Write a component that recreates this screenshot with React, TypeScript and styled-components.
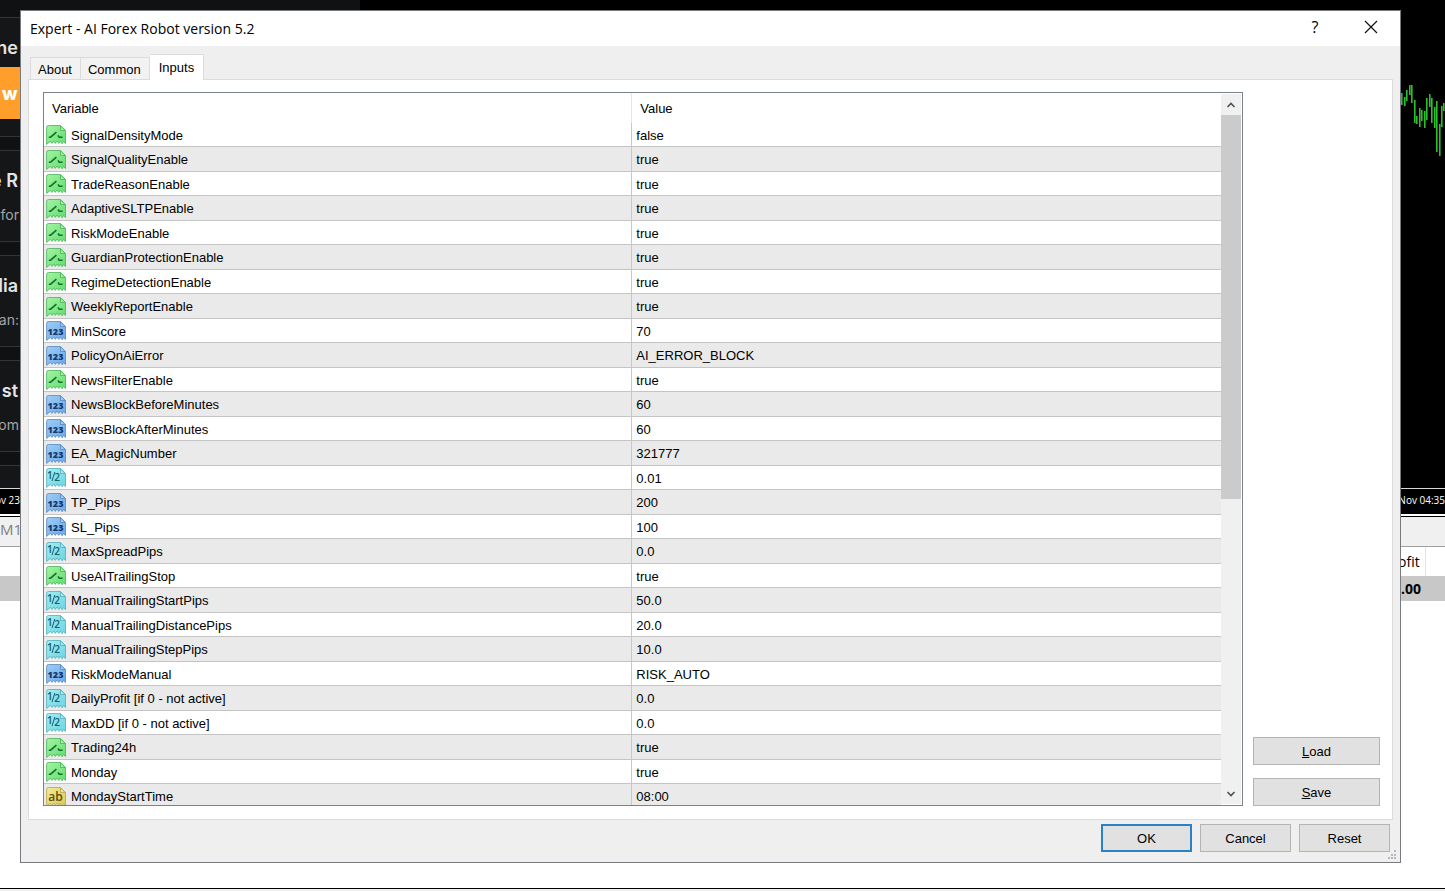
import React, { useState } from "react";
import styled, { createGlobalStyle, css } from "styled-components";

const GlobalStyle = createGlobalStyle`
  *, *::before, *::after { box-sizing: border-box; }
  body { margin: 0; background: #fff; }
  button { font: inherit; color: inherit; }
`;

const uiFont = `"Liberation Sans", Arial, sans-serif`;
const segoe = `"Open Sans", "Noto Sans", sans-serif`;

/* ---------- data ---------- */

type Kind = "bool" | "int" | "real" | "text";

const inputs: [Kind, string, string][] = [
  ["bool", "SignalDensityMode", "false"],
  ["bool", "SignalQualityEnable", "true"],
  ["bool", "TradeReasonEnable", "true"],
  ["bool", "AdaptiveSLTPEnable", "true"],
  ["bool", "RiskModeEnable", "true"],
  ["bool", "GuardianProtectionEnable", "true"],
  ["bool", "RegimeDetectionEnable", "true"],
  ["bool", "WeeklyReportEnable", "true"],
  ["int", "MinScore", "70"],
  ["int", "PolicyOnAiError", "AI_ERROR_BLOCK"],
  ["bool", "NewsFilterEnable", "true"],
  ["int", "NewsBlockBeforeMinutes", "60"],
  ["int", "NewsBlockAfterMinutes", "60"],
  ["int", "EA_MagicNumber", "321777"],
  ["real", "Lot", "0.01"],
  ["int", "TP_Pips", "200"],
  ["int", "SL_Pips", "100"],
  ["real", "MaxSpreadPips", "0.0"],
  ["bool", "UseAITrailingStop", "true"],
  ["real", "ManualTrailingStartPips", "50.0"],
  ["real", "ManualTrailingDistancePips", "20.0"],
  ["real", "ManualTrailingStepPips", "10.0"],
  ["int", "RiskModeManual", "RISK_AUTO"],
  ["real", "DailyProfit [if 0 - not active]", "0.0"],
  ["real", "MaxDD [if 0 - not active]", "0.0"],
  ["bool", "Trading24h", "true"],
  ["bool", "Monday", "true"],
  ["text", "MondayStartTime", "08:00"],
];

/* x, top, bottom of each price bar */
const bars = [
  [0, 13, 25], [3, 17, 26], [5, 10, 21], [8, 5, 15], [10, 5, 23], [13, 20, 43],
  [15, 36, 44], [18, 28, 47], [20, 30, 41], [23, 31, 48], [25, 18, 40], [28, 14, 27],
  [30, 18, 43], [33, 27, 48], [35, 21, 72], [38, 44, 76], [40, 26, 47], [42, 23, 31],
];

/* ---------- terminal behind the dialog ---------- */

const Screen = styled.div`
  position: relative;
  display: flex;
  min-height: 100vh;
  padding: 10px 44px 28px 20px;
  overflow: hidden;
  font-family: ${uiFont};
  font-size: 13px;
  color: #000;
`;

const Backdrop = styled.div`
  position: absolute;
  inset: 0;
  display: flex;
  flex-direction: column;
  background: #fff;
`;

const Workspace = styled.div`
  display: flex;
  height: 488px;
  background: #000;
`;

const Sidebar = styled.aside`
  display: flex;
  flex-direction: column;
  gap: 13px;
  width: 360px;
  padding-top: 17px;
  overflow: hidden;
  background: #101113;
  font-family: Inter, sans-serif;
`;

const Card = styled.section<{ $tall?: boolean }>`
  flex: none;
  height: ${(p) => (p.$tall ? 120 : 92)}px;
  padding-top: 18px;
  border: solid #30353a;
  border-width: 1px 0;
  background: #141618;
`;

const CardTitle = styled.div`
  display: flex;
  justify-content: flex-end;
  width: 18px;
  height: 24px;
  font-size: 18px;
  line-height: 24px;
  font-weight: 600;
  color: #e4e4e4;
  white-space: nowrap;
`;

const CardText = styled.div`
  display: flex;
  justify-content: flex-end;
  width: 19px;
  margin-top: 12px;
  font-size: 14px;
  line-height: 20px;
  color: #a6a6a6;
  white-space: nowrap;
`;

const Banner = styled.div`
  height: 52px;
  margin-top: 7px;
  padding-left: 2px;
  background: #ff9e2a;
  font-size: 18px;
  line-height: 54px;
  font-weight: 800;
  color: #fff;
`;

const Chart = styled.div`
  display: flex;
  flex: 1;
  justify-content: flex-end;
  padding-top: 80px;
`;

const TimeAxis = styled.div`
  display: flex;
  justify-content: space-between;
  height: 26px;
  border-top: 1px solid #d8d8d8;
  background: #000;
  font: 10px/22px ${segoe};
  color: #fff;
  white-space: nowrap;
`;

const AxisLabel = styled.span<{ $start?: boolean }>`
  display: flex;
  justify-content: flex-end;
  width: ${(p) => (p.$start ? "20px" : "auto")};
`;

const ChartTabs = styled.div`
  height: 31px;
  border-top: 1px solid #000;
  border-bottom: 1px solid #a0a0a0;
  margin-top: 2px;
  background: #f0f0f0;
  font: 15px/24px ${segoe};
  color: #808080;
`;

const TradeRow = styled.div<{ $selected?: boolean }>`
  display: flex;
  justify-content: flex-end;
  height: ${(p) => (p.$selected ? 25 : 29)}px;
  font: 14px/30px ${segoe};
  ${(p) =>
    p.$selected &&
    css`
      background: #c8c8c8;
      font-weight: 700;
      line-height: 26px;
    `}
`;

const TradeCell = styled.span`
  width: 44px;
`;

const TradeHead = styled.span`
  width: 28px;
  margin-right: 19px;
  border-right: 1px solid #e5e5e5;
`;

const StatusEdge = styled.div`
  height: 3px;
  margin-top: auto;
  border-top: 1px solid #000;
  background: #f0f0f0;
`;

/* ---------- dialog ---------- */

const Dialog = styled.main`
  position: relative;
  display: flex;
  flex: 1;
  flex-direction: column;
  min-width: 0;
  border: 1px solid #777a7e;
  background: #efefef;
`;

const TitleBar = styled.header`
  display: flex;
  align-items: center;
  height: 35px;
  padding: 0 9px;
  background: #fff;
`;

const Title = styled.h1`
  flex: 1;
  margin: 0;
  font: 400 14px/20px ${segoe};
`;

const CaptionButton = styled.button`
  display: flex;
  align-items: center;
  justify-content: center;
  width: 40px;
  height: 28px;
  margin-left: 16px;
  padding: 0 0 4px;
  border: 0;
  background: none;
  font: 500 16px/20px ${segoe};
`;

const TabList = styled.div`
  display: flex;
  align-items: flex-end;
  height: 33px;
  padding: 0 9px;
`;

const Tab = styled.button<{ $active: boolean }>`
  height: 22px;
  padding: 2px 8px 0 7px;
  border: solid #dcdcdc;
  border-width: 1px 1px 0 0;
  background: #f2f2f2;
  line-height: 19px;
  white-space: nowrap;
  &:first-child { border-left-width: 1px; }
  ${(p) =>
    p.$active &&
    css`
      position: relative;
      z-index: 1;
      height: 26px;
      margin-bottom: -1px;
      padding: 0 9px 1px;
      background: #fff;
    `}
`;

const Page = styled.section`
  display: flex;
  flex: 1;
  gap: 10px;
  min-height: 0;
  margin: 0 7px;
  padding: 12px 12px 13px 14px;
  border: 1px solid #dcdcdc;
  background: #fff;
`;

const ListBox = styled.div`
  display: flex;
  flex: 1;
  height: calc(100vh - 177px);
  min-width: 0;
  overflow: hidden;
  border: 1px solid #7c828a;
`;

const TableWrap = styled.div`
  flex: 1;
  min-width: 0;
  height: 100%;
  overflow: hidden;
`;

const Table = styled.table`
  width: 100%;
  border-collapse: separate;
  border-spacing: 0;
  table-layout: fixed;
`;

const HeadCell = styled.th`
  height: 30px;
  padding: 0 8px;
  font-weight: 400;
  text-align: left;
  &:first-child { width: 49.9%; }
  & + & { border-left: 1px solid #e5e5e5; }
`;

const Row = styled.tr`
  height: 24px;
  &:nth-child(even) { height: 25px; background: #eaeaea; }
`;

const Cell = styled.td`
  padding: 1px 4px 0;
  border-bottom: 1px solid #c4c4c4;
  white-space: nowrap;
  & + & { border-left: 1px solid #c8c8c8; }
`;

const NameCell = styled(Cell)`
  padding: 1px 2px 0;
`;

const Name = styled.span`
  display: flex;
  align-items: center;
  gap: 5px;
  height: 22px;
`;

const ScrollBar = styled.div`
  display: flex;
  flex-direction: column;
  width: 20px;
  margin: 1px 1px 1px 0;
  background: #f0f0f0;
`;

const ScrollButton = styled.button`
  display: flex;
  flex: none;
  align-items: center;
  justify-content: center;
  height: 21px;
  padding: 0;
  border: 0;
  background: none;
`;

const Track = styled.div`
  flex: 1;
`;

const Thumb = styled.div`
  height: 57.5%;
  background: #cbcbcb;
`;

const SideButtons = styled.div`
  display: flex;
  flex-direction: column;
  justify-content: flex-end;
  gap: 13px;
  width: 127px;
`;

const PushButton = styled.button<{ $default?: boolean; $wide?: boolean }>`
  width: ${(p) => (p.$wide ? "100%" : "91px")};
  height: 28px;
  padding: 1px 0 0;
  border: ${(p) => (p.$default ? "2px solid #2a82c4" : "1px solid #b4b4b4")};
  background: #e1e1e1;
  line-height: 23px;
`;

const Footer = styled.footer`
  display: flex;
  align-items: flex-start;
  justify-content: flex-end;
  gap: 8px;
  height: 42px;
  padding: 4px 10px 0;
`;

const Grip = styled.svg`
  position: absolute;
  right: 3px;
  bottom: 2px;
`;

/* ---------- icons ---------- */

const palette: Record<Kind, { light: string; dark: string; edge: string; ink: string }> = {
  bool: { light: "#a4f4a2", dark: "#62dc70", edge: "#48b457", ink: "#13702c" },
  int: { light: "#9fcdf6", dark: "#6aa8e6", edge: "#5589c0", ink: "#123a70" },
  real: { light: "#a5edf3", dark: "#6bd3e0", edge: "#4fafbd", ink: "#13626f" },
  text: { light: "#f4ea98", dark: "#dcca54", edge: "#b5a548", ink: "#5c4c0c" },
};

const IconDefs = () => (
  <svg width="0" height="0" style={{ position: "absolute" }} aria-hidden="true">
    <defs>
      {(Object.keys(palette) as Kind[]).map((k) => (
        <linearGradient key={k} id={`paper-${k}`} x1="0" y1="0" x2="1" y2="1">
          <stop offset="0" stopColor={palette[k].light} />
          <stop offset="1" stopColor={palette[k].dark} />
        </linearGradient>
      ))}
    </defs>
  </svg>
);

const labels: Partial<Record<Kind, string>> = { int: "123", text: "ab" };

const TypeIcon = ({ kind }: { kind: Kind }) => {
  const c = palette[kind];
  return (
    <svg width="20" height="20" viewBox="0 0 20 20" aria-hidden="true">
      <path
        d="M2.5 .5H14.5L19.5 5.5V18.5L17.5 16.6L16.2 18.8L14.3 16.2L12.8 18.4L11 16L9.3 18.4L7.6 16L6 18.4L4.3 16.4L.6 19.4V2.5Q.5 .5 2.5 .5Z"
        fill={`url(#paper-${kind})`}
        stroke={c.edge}
        strokeWidth=".8"
      />
      <path d="M14.5 .8V5.5H19.2Z" fill={c.light} stroke={c.edge} strokeWidth=".8" />
      {kind === "bool" && (
        <path d="M2.8 12.2H4.6L10.4 7.2M12 10.4L13.2 12.2H16.6" fill="none" stroke={c.ink} strokeWidth="1.6" />
      )}
      {labels[kind] && (
        <text
          x="9.5"
          y="14"
          textAnchor="middle"
          fontFamily="Open Sans, sans-serif"
          fontWeight={kind === "int" ? 800 : 600}
          fontSize={kind === "int" ? 9 : 12}
          fill={c.ink}
        >
          {labels[kind]}
        </text>
      )}
      {kind === "real" && (
        <g fontFamily="Open Sans, sans-serif" fontWeight="600" fontSize="10" fill={c.ink}>
          <text x="1" y="11">1</text>
          <path d="M6 13L8.8 4" stroke={c.ink} strokeWidth="1" />
          <text x="8.2" y="13">2</text>
        </g>
      )}
    </svg>
  );
};

const Chevron = ({ down }: { down?: boolean }) => (
  <svg width="10" height="8" viewBox="0 0 10 8" fill="none" stroke="#505050" strokeWidth="1.6" aria-hidden="true">
    <path d={down ? "M1.5 2L5 5.5L8.5 2" : "M1.5 6L5 2.5L8.5 6"} />
  </svg>
);

/* ---------- application ---------- */

const tabs = ["About", "Common", "Inputs"];

export default function App() {
  const [active, setActive] = useState("Inputs");

  return (
    <Screen>
      <GlobalStyle />
      <IconDefs />
      <Backdrop>
        <Workspace>
          <Sidebar>
            <Card $tall>
              <CardTitle>ne</CardTitle>
              <Banner>w</Banner>
            </Card>
            <Card>
              <CardTitle>e R</CardTitle>
              <CardText>g for</CardText>
            </Card>
            <Card>
              <CardTitle>dia</CardTitle>
              <CardText>an:</CardText>
            </Card>
            <Card>
              <CardTitle>st</CardTitle>
              <CardText>om</CardText>
            </Card>
            <Card />
          </Sidebar>
          <Chart>
            <svg width="44" height="80" viewBox="0 0 44 80" aria-hidden="true">
              {bars.map(([x, top, bottom]) => (
                <path key={x} d={`M${x + 0.8} ${top}V${bottom}`} stroke="#2ebf2e" strokeWidth="1.6" />
              ))}
            </svg>
          </Chart>
        </Workspace>
        <TimeAxis>
          <AxisLabel $start>ov 23</AxisLabel>
          <AxisLabel>Nov 04:35</AxisLabel>
        </TimeAxis>
        <ChartTabs>M1</ChartTabs>
        <TradeRow>
          <TradeHead>ofit</TradeHead>
        </TradeRow>
        <TradeRow $selected>
          <TradeCell>.00</TradeCell>
        </TradeRow>
        <StatusEdge />
      </Backdrop>

      <Dialog role="dialog" aria-labelledby="dialog-title">
        <TitleBar>
          <Title id="dialog-title">Expert - AI Forex Robot version 5.2</Title>
          <CaptionButton aria-label="Help">?</CaptionButton>
          <CaptionButton aria-label="Close">
            <svg width="14" height="14" viewBox="0 0 14 14" stroke="#111" strokeWidth="1.2" aria-hidden="true">
              <path d="M1 1L13 13M13 1L1 13" />
            </svg>
          </CaptionButton>
        </TitleBar>

        <TabList role="tablist">
          {tabs.map((t) => (
            <Tab key={t} role="tab" aria-selected={active === t} $active={active === t} onClick={() => setActive(t)}>
              {t}
            </Tab>
          ))}
        </TabList>

        <Page role="tabpanel" aria-label={active}>
          <ListBox>
            <TableWrap>
              <Table>
                <thead>
                  <tr>
                    <HeadCell scope="col">Variable</HeadCell>
                    <HeadCell scope="col">Value</HeadCell>
                  </tr>
                </thead>
                <tbody>
                  {inputs.map(([kind, name, value]) => (
                    <Row key={name}>
                      <NameCell>
                        <Name>
                          <TypeIcon kind={kind} />
                          {name}
                        </Name>
                      </NameCell>
                      <Cell>{value}</Cell>
                    </Row>
                  ))}
                </tbody>
              </Table>
            </TableWrap>
            <ScrollBar>
              <ScrollButton aria-label="Scroll up">
                <Chevron />
              </ScrollButton>
              <Track>
                <Thumb />
              </Track>
              <ScrollButton aria-label="Scroll down">
                <Chevron down />
              </ScrollButton>
            </ScrollBar>
          </ListBox>
          <SideButtons>
            <PushButton $wide>
              <u>L</u>oad
            </PushButton>
            <PushButton $wide>
              <u>S</u>ave
            </PushButton>
          </SideButtons>
        </Page>

        <Footer>
          <PushButton $default>OK</PushButton>
          <PushButton>Cancel</PushButton>
          <PushButton>Reset</PushButton>
        </Footer>
        <Grip width="10" height="10" viewBox="0 0 10 10" fill="#b8b8b8" aria-hidden="true">
          <path d="M7 0h2v2H7zM4 4h2v2H4zM7 4h2v2H7zM1 7h2v2H1zM4 7h2v2H4zM7 7h2v2H7z" />
        </Grip>
      </Dialog>
    </Screen>
  );
}
